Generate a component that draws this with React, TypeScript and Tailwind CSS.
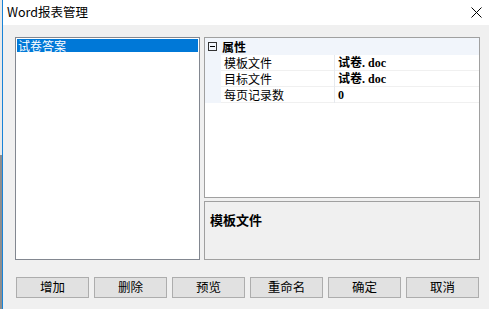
import React from "react";

const cjk = { fontFamily: '"Noto Sans CJK SC", "Noto Sans", sans-serif' };
const valFont = { fontFamily: '"Liberation Serif", "Noto Sans CJK SC", serif' };

const props = [
  { name: "模板文件", value: "试卷. doc" },
  { name: "目标文件", value: "试卷. doc" },
  { name: "每页记录数", value: "0" },
];

const buttons = ["增加", "删除", "预览", "重命名", "确定", "取消"];

export default function App() {
  return (
    <div className="flex h-[309px] w-[489px] overflow-hidden bg-[#f0f0f0] text-black" style={cjk}>
      {/* bit of the window behind */}
      <div className="flex w-[2px] flex-col">
        <div className="h-[155px] bg-[#e9e9e9]" />
        <div className="flex-1 bg-[#8e8e8e]" />
      </div>

      <div className="flex flex-1 flex-col border-l border-[#1883d7]">
        <div className="flex h-[25px] items-center justify-between bg-white pl-[4px] pr-[7px]">
          <span className="text-[12.5px] leading-none">Word报表管理</span>
          <svg width="11" height="11" viewBox="0 0 11 11">
            <path d="M0.5 0.5 L10.5 10.5 M10.5 0.5 L0.5 10.5" stroke="#000" strokeWidth="1" fill="none" />
          </svg>
        </div>

        <div className="flex flex-col pl-[12px] pt-[12px]">
          <div className="flex h-[223px] gap-[4px]">
            {/* list */}
            <div className="w-[185px] border border-[#828790] bg-white p-[1px]">
              <div className="flex h-[13px] items-center bg-[#0078d7] pl-[1px] text-[12px] leading-none text-white">
                试卷答案
              </div>
            </div>

            {/* property grid + description */}
            <div className="flex w-[276px] flex-col gap-[3px]">
              <div className="h-[161px] border border-[#a0a0a0] bg-white">
                <div className="flex h-[17px] items-center bg-[#f1f5fb] pl-[3px]">
                  <div className="mr-[5px] flex h-[9px] w-[9px] items-center justify-center border border-[#333]">
                    <div className="h-[1px] w-[5px] bg-black" />
                  </div>
                  <span className="text-[12px] font-bold leading-none">属性</span>
                </div>
                {props.map((p) => (
                  <div key={p.name} className="flex h-[16px]">
                    <div className="w-[16px] bg-[#f1f5fb]" />
                    <div className="flex w-[113px] items-center border-b border-[#f0f0f0] pl-[3px] text-[12px] leading-none">
                      {p.name}
                    </div>
                    <div className="w-[1px] bg-[#e6e9ee]" />
                    <div
                      className="flex flex-1 items-center border-b border-[#f0f0f0] pl-[3px] text-[12px] font-bold leading-none"
                      style={valFont}
                    >
                      {p.value}
                    </div>
                  </div>
                ))}
              </div>
              <div className="h-[59px] border border-[#a0a0a0] bg-[#f0f0f0] pl-[5px] pt-[4px]">
                <span className="text-[13px] font-bold leading-none">模板文件</span>
              </div>
            </div>
          </div>

          <div className="mt-[17px] flex gap-[5px] pl-[1px]">
            {buttons.map((b) => (
              <button
                key={b}
                className="flex h-[21px] w-[73px] items-center justify-center border border-[#adadad] bg-[#e1e1e1] text-[12.5px] leading-none"
              >
                {b}
              </button>
            ))}
          </div>
        </div>
      </div>
    </div>
  );
}
